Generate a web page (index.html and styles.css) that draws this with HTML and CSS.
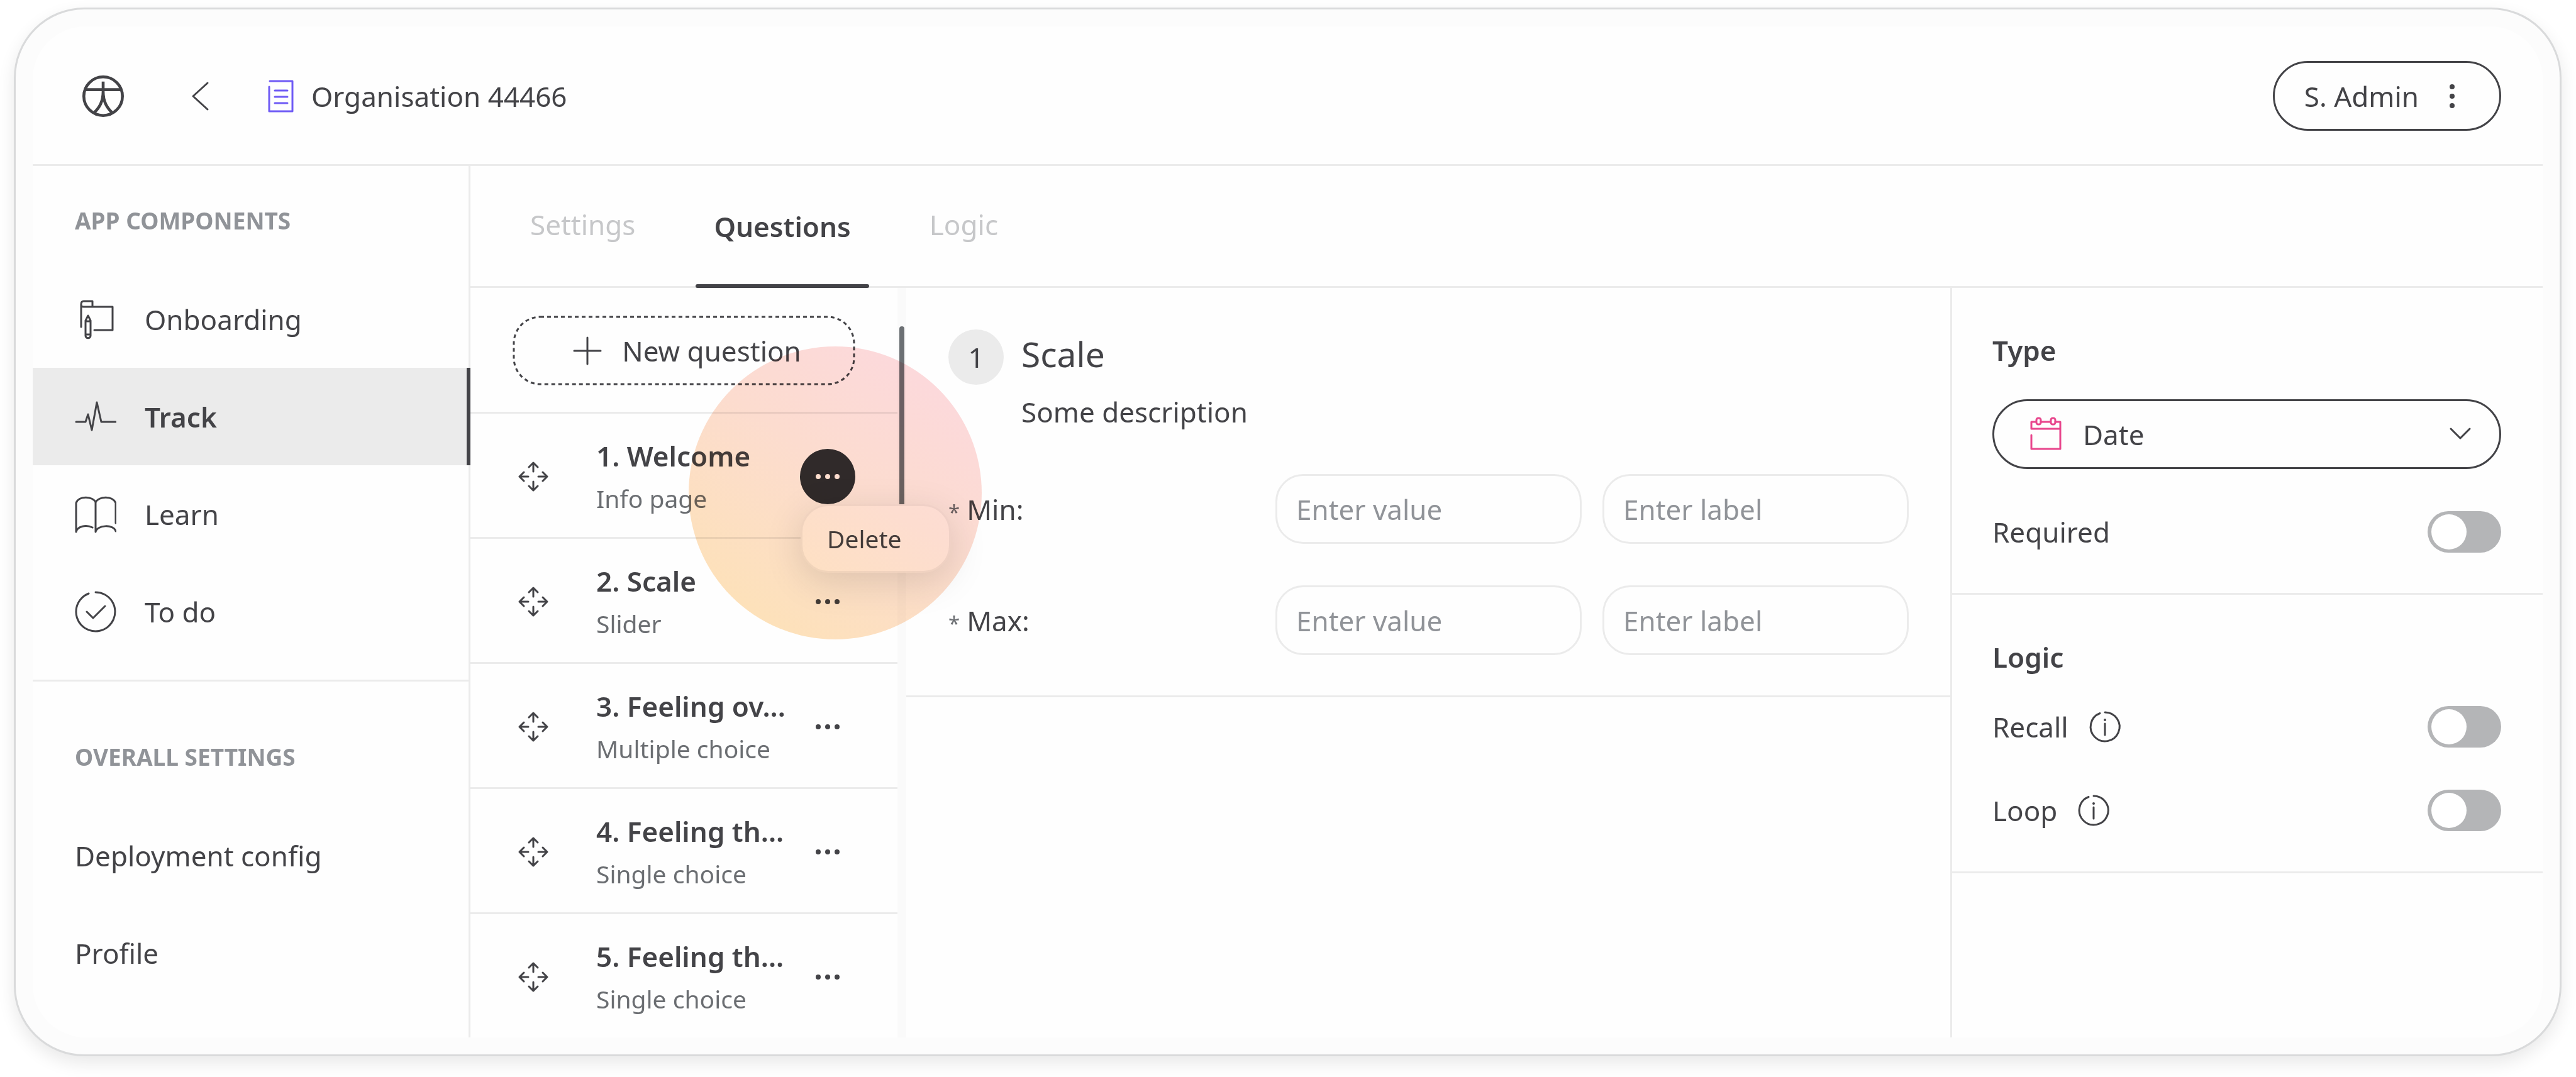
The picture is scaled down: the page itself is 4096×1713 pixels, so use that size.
FILE: index.html
```html
<!DOCTYPE html>
<html lang="en">
<head>
<meta charset="utf-8">
<meta name="viewport" content="width=device-width, initial-scale=1">
<title>Organisation 44466 – Track</title>
<link rel="stylesheet" href="styles.css">
</head>
<body>
<svg class="sprite" aria-hidden="true">
  <symbol id="i-move" viewBox="-25 -25 50 50">
    <path d="M0-8V-22M-7-15L0-22L7-15M0 8V22M-7 15L0 22L7 15M-8 0H-22M-15-7L-22 0L-15 7M8 0H22M15-7L22 0L15 7"/>
  </symbol>
  <symbol id="i-more" viewBox="-33 -33 66 66">
    <g class="dots"><circle cx="-15" r="4"/><circle r="4"/><circle cx="15" r="4"/></g>
  </symbol>
  <symbol id="i-info" viewBox="-33 -33 66 66">
    <path d="M0-23A23 23 0 1 1-8-21.5M0-5V13"/><circle class="dots" cy="-11" r="2"/>
  </symbol>
</svg>

<div class="frame">
<div class="app">
  <header class="topbar">
    <a class="logo" href="#" aria-label="Home">
      <svg class="icon icon-logo" viewBox="0 0 66 66"><circle cx="33" cy="33" r="30.7"/><path d="M5 22.6H61M33 9.7V25C33 42 27 51 18.5 59.5M33 25C33 42 39 51 47.5 59.5"/></svg>
    </a>
    <a class="back" href="#" aria-label="Back">
      <svg class="icon" viewBox="0 0 66 66"><path d="M45 12L22 33L45 54"/></svg>
    </a>
    <div class="org">
      <svg class="icon icon-doc" viewBox="0 0 66 66"><path d="M15 9H51V57H14V18M23 24H43M23 34H43M23 44H43"/></svg>
      <span>Organisation 44466</span>
    </div>
    <button class="user" type="button">
      <span>S. Admin</span>
      <svg class="icon" viewBox="-33 -33 66 66"><g class="dots"><circle cy="-15" r="4"/><circle r="4"/><circle cy="15" r="4"/></g></svg>
    </button>
  </header>

  <div class="body">
    <aside class="sidebar">
      <nav class="nav-group">
        <h2>APP COMPONENTS</h2>
        <a href="#"><svg class="icon" viewBox="0 0 66 66"><path d="M10 45V9C10 6 11 4 14 4H28V13M10 9C10 12 11 13 14 13H60V50H31M21 27L17 35V59C17 64 25 64 25 59V35ZM17 36H25M17 57H25"/></svg>Onboarding</a>
        <a class="active" href="#"><svg class="icon" viewBox="0 0 66 66"><path d="M2 41H17L21 29L27 54L35 10L42 41H65"/></svg>Track</a>
        <a href="#"><svg class="icon" viewBox="0 0 66 66"><path d="M28 54C18 49 4 52 2 61V15C6 3 29 4 33 14V61C35 50 62 48 65 60M33 14C38 4 60 3 65 15V47"/></svg>Learn</a>
        <a href="#"><svg class="icon" viewBox="0 0 66 66"><path d="M33 2A31 31 0 1 1 22 4M19 33L29 43L48 24"/></svg>To do</a>
      </nav>
      <nav class="nav-group nav-overall">
        <h2>OVERALL SETTINGS</h2>
        <a href="#">Deployment config</a>
        <a href="#">Profile</a>
      </nav>
    </aside>

    <main class="main">
      <nav class="tabs">
        <a href="#">Settings</a>
        <a class="active" href="#">Questions</a>
        <a href="#">Logic</a>
      </nav>

      <div class="workspace">
        <section class="questions">
          <div class="list">
            <div class="add">
              <button class="new" type="button">
                <svg class="outline"><rect width="100%" height="100%" rx="42"/></svg>
                <svg class="icon" viewBox="0 0 66 66"><path d="M33 12V54M12 33H54"/></svg>
                <span>New question</span>
              </button>
            </div>
            <ol class="items">
              <li>
                <svg class="move"><use href="#i-move"/></svg>
                <div class="text"><strong>1. Welcome</strong><span>Info page</span></div>
                <button class="more open" type="button" aria-label="More"><svg class="icon"><use href="#i-more"/></svg></button>
              </li>
              <li>
                <svg class="move"><use href="#i-move"/></svg>
                <div class="text"><strong>2. Scale</strong><span>Slider</span></div>
                <button class="more" type="button" aria-label="More"><svg class="icon"><use href="#i-more"/></svg></button>
              </li>
              <li>
                <svg class="move"><use href="#i-move"/></svg>
                <div class="text"><strong>3. Feeling ov...</strong><span>Multiple choice</span></div>
                <button class="more" type="button" aria-label="More"><svg class="icon"><use href="#i-more"/></svg></button>
              </li>
              <li>
                <svg class="move"><use href="#i-move"/></svg>
                <div class="text"><strong>4. Feeling th...</strong><span>Single choice</span></div>
                <button class="more" type="button" aria-label="More"><svg class="icon"><use href="#i-more"/></svg></button>
              </li>
              <li>
                <svg class="move"><use href="#i-move"/></svg>
                <div class="text"><strong>5. Feeling th...</strong><span>Single choice</span></div>
                <button class="more" type="button" aria-label="More"><svg class="icon"><use href="#i-more"/></svg></button>
              </li>
            </ol>
          </div>
          <div class="track"><div class="thumb"></div></div>
          <button class="menu" type="button">Delete</button>
          <div class="spotlight"></div>
        </section>

        <section class="editor">
          <div class="question">
            <div class="heading">
              <span class="number">1</span>
              <div>
                <h1>Scale</h1>
                <p>Some description</p>
              </div>
            </div>
            <div class="field">
              <label for="min-value"><span class="star">*</span>Min:</label>
              <input id="min-value" type="text" placeholder="Enter value">
              <input type="text" placeholder="Enter label" aria-label="Min label">
            </div>
            <div class="field">
              <label for="max-value"><span class="star">*</span>Max:</label>
              <input id="max-value" type="text" placeholder="Enter value">
              <input type="text" placeholder="Enter label" aria-label="Max label">
            </div>
          </div>
        </section>

        <aside class="panel">
          <section>
            <h3><label for="type">Type</label></h3>
            <div class="select">
              <select id="type"><option>Date</option></select>
              <svg class="icon icon-date" viewBox="-33 -33 66 66"><path d="M-16-19H-23V-8H23V-19H15M-8-19H7M-23 2V24H23V-8"/><rect x="-15" y="-25" width="7" height="10" rx="3"/><rect x="8" y="-25" width="7" height="10" rx="3"/></svg>
              <svg class="icon icon-caret" viewBox="-33 -33 66 66"><path d="M-15-8L0 7L15-8"/></svg>
            </div>
            <div class="row">
              <label for="required">Required</label>
              <input class="switch" id="required" type="checkbox">
            </div>
          </section>
          <section>
            <h3>Logic</h3>
            <div class="row">
              <label for="recall">Recall</label>
              <svg class="icon"><use href="#i-info"/></svg>
              <input class="switch" id="recall" type="checkbox">
            </div>
            <div class="row">
              <label for="loop">Loop</label>
              <svg class="icon"><use href="#i-info"/></svg>
              <input class="switch" id="loop" type="checkbox">
            </div>
          </section>
        </aside>
      </div>
    </main>
  </div>
</div>
</div>
</body>
</html>
```

FILE: styles.css
```css
:root {
  --ink: #434347;
  --muted: #6b6e72;
  --soft: #909398;
  --line: #ebebeb;
}

* { box-sizing: border-box; }

body {
  margin: 0;
  padding: 12px 23px 33px 22px;
  background: #fff;
  color: var(--ink);
  font-family: "Noto Sans", sans-serif;
  font-size: 44px;
  line-height: 66px;
}

h1, h2, h3, p, ol { margin: 0; padding: 0; }
a { color: inherit; text-decoration: none; }
button, input, select { margin: 0; font: inherit; color: inherit; background: none; }
.sprite { position: absolute; width: 0; height: 0; }

svg {
  flex: none;
  fill: none;
  stroke: currentColor;
  stroke-width: 3px;
  stroke-linecap: round;
  stroke-linejoin: round;
}
.icon { display: block; width: 66px; height: 66px; }
.icon-logo { stroke-width: 4.6; stroke-linecap: butt; }
.icon-doc { color: #6f5bf5; }
.dots { fill: currentColor; stroke: none; }

/* Window */
.frame {
  height: calc(100vh - 45px);
  padding: 27px;
  border: 3px solid #d9dadb;
  border-radius: 112px;
  background: #fcfcfc;
  box-shadow: 0 11px 28px rgba(0, 0, 0, .09);
}
.app {
  display: flex;
  flex-direction: column;
  height: 100%;
  border-radius: 84px;
  background: #fefefe;
  overflow: hidden;
}

/* Top bar */
.topbar {
  display: flex;
  align-items: center;
  padding: 55px 66px 53px 79px;
  border-bottom: 3px solid var(--line);
}
.back { margin-left: 88px; }
.org { display: flex; align-items: center; gap: 15px; margin-left: 63px; }
.user {
  display: flex;
  align-items: center;
  gap: 20px;
  height: 111px;
  margin-left: auto;
  padding: 0 42px 0 47px;
  border: 3px solid var(--ink);
  border-radius: 56px;
}

.body { display: flex; flex: 1; min-height: 0; }

/* Sidebar */
.sidebar { flex: none; width: 696px; border-right: 3px solid var(--line); }
.nav-group { padding: 62px 0 31px; }
.nav-overall { padding-top: 95px; border-top: 3px solid var(--line); }
.nav-group h2 {
  padding: 0 67px 54px;
  color: var(--soft);
  font-size: 37px;
  font-weight: 700;
  line-height: 50px;
}
.nav-group a { display: flex; align-items: center; gap: 45px; height: 155px; padding: 0 67px; }
.nav-group .active {
  margin-right: -3px;
  border-right: 6px solid var(--ink);
  background: var(--line);
  font-weight: 600;
}

/* Tabs */
.main { display: flex; flex-direction: column; flex: 1; min-width: 0; }
.tabs { display: flex; gap: 67px; height: 194px; padding: 0 66px; border-bottom: 3px solid var(--line); color: #c6c7c9; }
.tabs a { display: flex; align-items: center; padding: 0 29px 6px; }
.tabs .active { position: relative; padding-bottom: 0; color: var(--ink); font-weight: 600; }
.tabs .active::after {
  content: "";
  position: absolute;
  right: 0;
  bottom: -3px;
  left: 0;
  height: 6px;
  border-radius: 3px;
  background: var(--ink);
}

.workspace { display: flex; flex: 1; min-height: 0; }

/* Question list */
.questions { position: relative; display: flex; flex: none; width: 693px; }
.list { flex: 1; min-width: 0; overflow: hidden; }
.add { padding: 44px 67px 42px; border-bottom: 3px solid var(--line); }
.new {
  position: relative;
  display: flex;
  align-items: center;
  justify-content: center;
  gap: 22px;
  width: 100%;
  height: 111px;
  padding: 0;
  border: 0;
}
.outline {
  position: absolute;
  top: 2px;
  left: 2px;
  width: calc(100% - 4px);
  height: calc(100% - 4px);
  overflow: visible;
  stroke-dasharray: 6 5;
  stroke-linecap: butt;
}
.items { list-style: none; }
.items li {
  display: flex;
  align-items: center;
  height: 199px;
  padding: 3px 67px 0 75px;
  border-bottom: 3px solid var(--line);
}
.move { width: 50px; height: 50px; }
.text { display: grid; gap: 5px; flex: 1; min-width: 0; margin-left: 75px; white-space: nowrap; }
.text strong { font-weight: 600; }
.text span { color: var(--muted); font-size: 39px; line-height: 60px; }
.more {
  display: grid;
  place-items: center;
  flex: none;
  width: 88px;
  height: 88px;
  padding: 0;
  border: 0;
  border-radius: 50%;
}
.more.open { background: #303033; color: #fff; }
.track { flex: none; width: 14px; padding: 61px 3px 0; background: #fafafa; }
.thumb { height: 330px; border-radius: 4px; background: #6b6f73; }
.menu {
  position: absolute;
  top: 344px;
  left: 525px;
  z-index: 1;
  width: 239px;
  height: 109px;
  padding: 0 39px;
  border: 3px solid #f2f2f2;
  border-radius: 44px;
  background: #fff;
  box-shadow: 0 14px 60px rgba(0, 0, 0, .13);
  font-size: 39px;
  text-align: left;
}
.spotlight {
  position: absolute;
  top: 93px;
  left: 347px;
  z-index: 2;
  width: 466px;
  height: 466px;
  border-radius: 50%;
  background: linear-gradient(35deg, #fee2bb 15%, #fdddd0 55%, #fddadc 85%);
  mix-blend-mode: multiply;
  pointer-events: none;
}

/* Editor */
.editor { flex: 1; min-width: 0; }
.question {
  display: grid;
  gap: 66px;
  padding: 66px 66px 64px 67px;
  border-bottom: 3px solid var(--line);
}
.heading { display: flex; gap: 28px; }
.number { width: 88px; height: 88px; border-radius: 50%; background: var(--line); line-height: 88px; text-align: center; }
h1 { font-size: 55px; font-weight: 400; line-height: 77px; }
.heading p { margin-top: 21px; }
.field { display: grid; grid-template-columns: 1fr 487px 487px; align-items: center; column-gap: 33px; }
.field label { display: flex; align-items: baseline; gap: 11px; }
.star { color: var(--muted); font-size: 33px; line-height: 33px; }
.field input {
  width: 100%;
  height: 111px;
  padding: 0 30px;
  border: 3px solid var(--line);
  border-radius: 44px;
}
.field input::placeholder { color: var(--soft); opacity: 1; }

/* Properties */
.panel { flex: none; width: 942px; border-left: 3px solid var(--line); }
.panel section { padding: 66px 66px 64px 64px; border-bottom: 3px solid var(--line); }
h3 { margin-bottom: 45px; font-size: 44px; font-weight: 600; }
.select { position: relative; margin-bottom: 67px; }
.select select {
  display: block;
  width: 100%;
  height: 111px;
  padding: 0 141px;
  border: 3px solid var(--ink);
  border-radius: 56px;
  appearance: none;
}
.select .icon { position: absolute; top: 22px; pointer-events: none; }
.icon-date { left: 52px; color: #e8458c; }
.icon-caret { right: 32px; }
.row { display: flex; align-items: center; gap: 25px; height: 66px; }
.row + .row { margin-top: 67px; }
.switch {
  width: 117px;
  height: 66px;
  margin-left: auto;
  padding: 5px 6px;
  border-radius: 33px;
  background: #b4b5b7;
  appearance: none;
}
.switch::before { content: ""; display: block; width: 56px; height: 56px; border-radius: 50%; background: #fff; }
```
